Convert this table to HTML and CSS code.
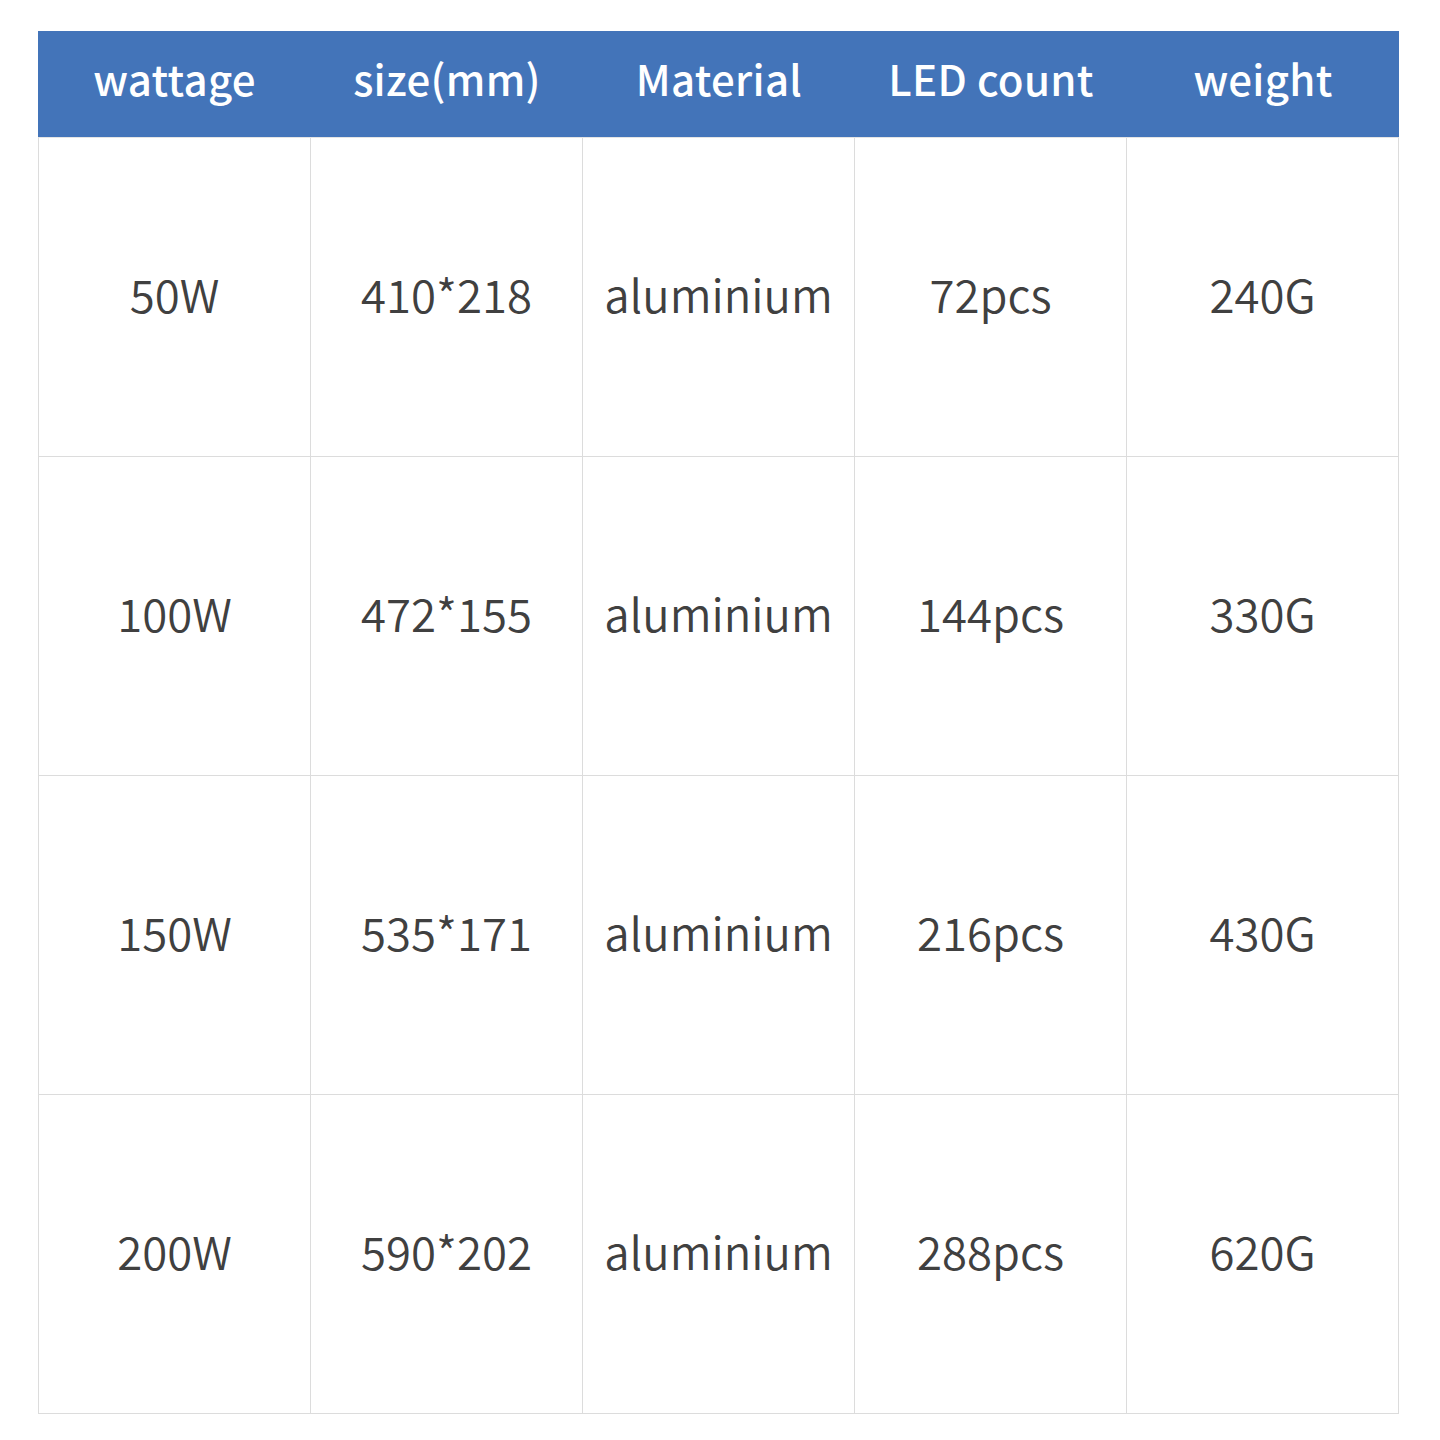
FILE: index.html
```html
<!DOCTYPE html>
<html>
<head>
<meta charset="utf-8">
<link rel="stylesheet" href="styles.css">
</head>
<body>
<div class="table">
  <div class="head">
    <div class="hc">wattage</div>
    <div class="hc">size(mm)</div>
    <div class="hc">Material</div>
    <div class="hc">LED count</div>
    <div class="hc">weight</div>
  </div>
  <div class="body">
    <div class="c">50W</div><div class="c">410*218</div><div class="c">aluminium</div><div class="c">72pcs</div><div class="c">240G</div>
    <div class="c">100W</div><div class="c">472*155</div><div class="c">aluminium</div><div class="c">144pcs</div><div class="c">330G</div>
    <div class="c">150W</div><div class="c">535*171</div><div class="c">aluminium</div><div class="c">216pcs</div><div class="c">430G</div>
    <div class="c">200W</div><div class="c">590*202</div><div class="c">aluminium</div><div class="c">288pcs</div><div class="c">620G</div>
  </div>
</div>
</body>
</html>
```

FILE: styles.css
```css
html, body {
  margin: 0;
  padding: 0;
  background: #ffffff;
}
body {
  padding: 31px 0 0 38px;
  font-family: "Noto Sans CJK SC", "Noto Sans", sans-serif;
}
.table {
  width: 1361px;
}
.head {
  display: grid;
  grid-template-columns: 273px repeat(4, 272px);
  height: 106px;
  background: #4374b9;
}
.hc {
  box-sizing: border-box;
  padding-bottom: 14px;
  display: flex;
  align-items: center;
  justify-content: center;
  color: #ffffff;
  font-size: 42px;
  font-weight: 500;
  letter-spacing: 0.3px;
}
.body {
  display: grid;
  grid-template-columns: repeat(5, 272px);
  grid-auto-rows: 319px;
  border-left: 1px solid #dcdcdc;
  border-top: 1px solid #e4e4e4;
}
.c {
  box-sizing: border-box;
  padding-bottom: 8px;
  border-right: 1px solid #dcdcdc;
  border-bottom: 1px solid #dcdcdc;
  display: flex;
  align-items: center;
  justify-content: center;
  color: #404040;
  font-size: 45.5px;
  font-weight: 350;
}
```
